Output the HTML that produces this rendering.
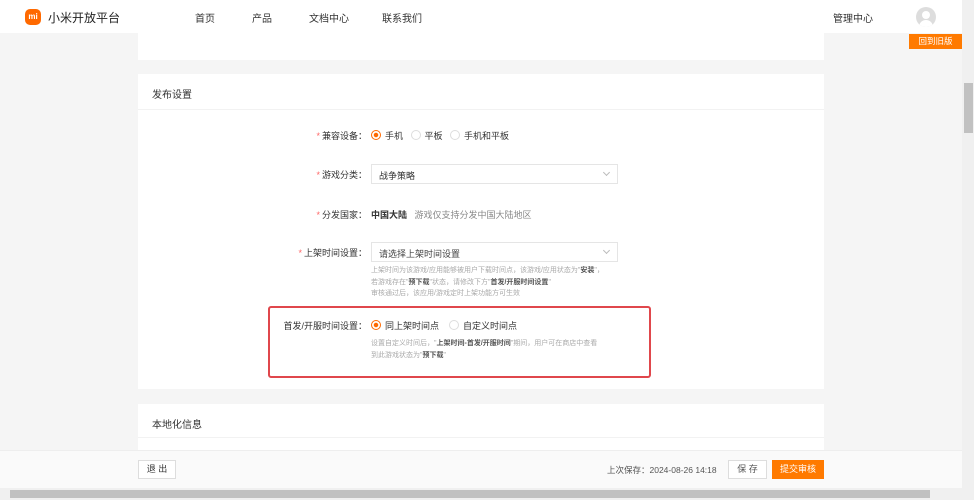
<!DOCTYPE html><html><head><meta charset="utf-8"><style>
*{margin:0;padding:0;box-sizing:border-box}
body{width:974px;height:500px;overflow:hidden;background:#f5f5f5;font-family:"Liberation Sans","Noto Sans CJK SC",sans-serif;color:#333;font-size:10px;position:relative}
.a{position:absolute}
.hdr{left:0;top:0;width:962px;height:33px;background:#fff}
.card{background:#fff;left:138px;width:686px}
.lbl{text-align:right;width:100px;font-size:9px;color:#333}
.st{color:#f66;margin-right:2px}
.rad{display:inline-block;width:10px;height:10px;border:1px solid #ddd;border-radius:50%;vertical-align:-1px;margin-right:4px}
.rad.on{border-color:#ff6900;background:radial-gradient(#ff6900 2px,#fff 2.5px)}
.sel{width:247px;height:20px;border:1px solid #e5e5e5;font-size:9px;padding:4px 7px;color:#333}
.sel:after{content:"";position:absolute;right:8px;top:5px;width:4px;height:4px;border-right:1px solid #bbb;border-bottom:1px solid #bbb;transform:rotate(45deg)}
.hint{font-size:7px;color:#aaa;line-height:11.5px}
.hint b{color:#555}
</style></head><body>
<div class="a hdr"></div>
<div class="a" style="left:25px;top:9px;width:16px;height:16px;background:#ff6900;border-radius:5px;color:#fff;font-size:8px;font-weight:bold;text-align:center;line-height:16px">mi</div>
<div class="a" style="left:48px;top:9px;font-size:12px;color:#222">小米开放平台</div>
<div class="a" style="left:195px;top:10px;font-size:10px">首页</div>
<div class="a" style="left:252px;top:10px;font-size:10px">产品</div>
<div class="a" style="left:309px;top:10px;font-size:10px">文档中心</div>
<div class="a" style="left:382px;top:10px;font-size:10px">联系我们</div>
<div class="a" style="left:833px;top:10px;font-size:10px">管理中心</div>
<div class="a" style="left:916px;top:7px;width:20px;height:20px;border-radius:50%;background:#ddd;overflow:hidden"><div class="a" style="left:6px;top:4px;width:8px;height:8px;border-radius:50%;background:#fff"></div><div class="a" style="left:3px;top:13px;width:14px;height:8px;border-radius:7px 7px 0 0;background:#fff"></div></div>
<div class="a" style="left:909px;top:34px;width:53px;height:15px;background:#ff7a00;color:#fff;font-size:8.5px;text-align:center;line-height:15px">回到旧版</div>
<div class="a card" style="top:33px;height:27px"></div>
<div class="a card" style="top:74px;height:315px"></div>
<div class="a" style="left:152px;top:86px;font-size:10px">发布设置</div>
<div class="a" style="left:138px;top:109px;width:686px;height:1px;background:#f2f2f2"></div>
<div class="a lbl" style="left:267px;top:129px"><span class="st">*</span>兼容设备：</div>
<div class="a" style="left:371px;top:129px;font-size:9px"><span class="rad on"></span>手机 &nbsp;&nbsp;<span class="rad"></span>平板 &nbsp;&nbsp;<span class="rad"></span>手机和平板</div>
<div class="a lbl" style="left:267px;top:168px"><span class="st">*</span>游戏分类：</div>
<div class="a sel" style="left:371px;top:164px">战争策略</div>
<div class="a lbl" style="left:267px;top:208px"><span class="st">*</span>分发国家：</div>
<div class="a" style="left:371px;top:208px;font-size:9px"><b>中国大陆</b>&nbsp;&nbsp; <span style="color:#888">游戏仅支持分发中国大陆地区</span></div>
<div class="a lbl" style="left:267px;top:246px"><span class="st">*</span>上架时间设置：</div>
<div class="a sel" style="left:371px;top:242px;color:#444">请选择上架时间设置</div>
<div class="a hint" style="left:371px;top:265px;width:260px">上架时间为该游戏/应用能够被用户下载时间点，该游戏/应用状态为"<b>安装</b>"，<br>若游戏存在"<b>预下载</b>"状态，请修改下方"<b>首发/开服时间设置</b>"<br>审核通过后，该应用/游戏定时上架功能方可生效</div>
<div class="a" style="left:268px;top:306px;width:383px;height:72px;border:2px solid #e0474c;border-radius:3px"></div>
<div class="a lbl" style="left:267px;top:319px">首发/开服时间设置：</div>
<div class="a" style="left:371px;top:319px;font-size:9px"><span class="rad on"></span>同上架时间点 &nbsp;&nbsp;&nbsp;<span class="rad"></span>自定义时间点</div>
<div class="a hint" style="left:371px;top:338px;width:260px">设置自定义时间后，"<b>上架时间-首发/开服时间</b>"期间，用户可在商店中查看<br>到此游戏状态为"<b>预下载</b>"</div>
<div class="a card" style="top:404px;height:50px"></div>
<div class="a" style="left:152px;top:416px;font-size:10px">本地化信息</div>
<div class="a" style="left:138px;top:437px;width:686px;height:1px;background:#f2f2f2"></div>
<div class="a" style="left:0;top:450px;width:962px;height:38px;background:#fafafa;border-top:1px solid #eee"></div>
<div class="a" style="left:138px;top:460px;width:38px;height:19px;border:1px solid #ddd;background:#fff;font-size:9px;text-align:center;line-height:17px">退 出</div>
<div class="a" style="left:607px;top:464px;font-size:8.5px;color:#555">上次保存：2024-08-26 14:18</div>
<div class="a" style="left:728px;top:460px;width:39px;height:19px;border:1px solid #ddd;background:#fff;font-size:9px;text-align:center;line-height:17px;color:#555">保 存</div>
<div class="a" style="left:772px;top:460px;width:52px;height:19px;background:#ff7a00;color:#fff;font-size:9px;text-align:center;line-height:19px">提交审核</div>
<div class="a" style="left:962px;top:0;width:12px;height:488px;background:#f0f0f0"></div>
<div class="a" style="left:964px;top:83px;width:9px;height:50px;background:#c1c1c1"></div>
<div class="a" style="left:0;top:488px;width:974px;height:12px;background:#f0f0f0"></div>
<div class="a" style="left:10px;top:490px;width:355px;height:8px;background:#c1c1c1"></div>
<div class="a" style="left:365px;top:490px;width:565px;height:8px;background:#c1c1c1"></div>
</body></html>
